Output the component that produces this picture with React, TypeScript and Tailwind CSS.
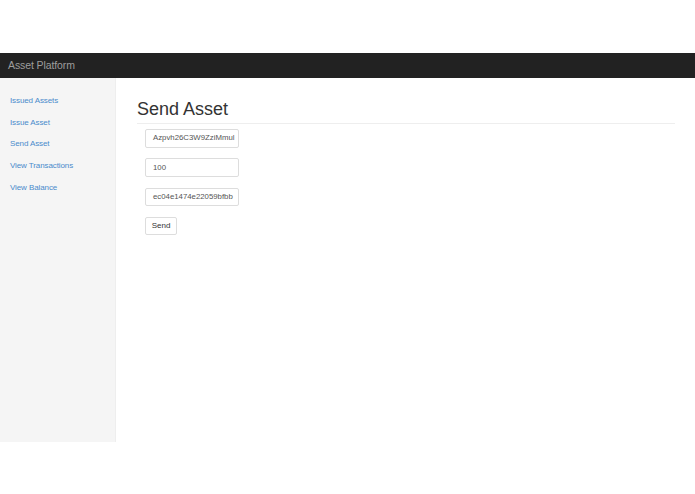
import React from "react";

const links = ["Issued Assets", "Issue Asset", "Send Asset", "View Transactions", "View Balance"];

export default function App() {
  return (
    <div className="w-[695px] h-[494px] bg-white overflow-hidden" style={{ fontFamily: '"Liberation Sans", Arial, sans-serif' }}>
      <div className="h-[53px]" />
      <div className="h-[25px] bg-[#222222] flex items-center pl-[8px]">
        <span className="text-[10.5px] text-[#9d9d9d] tracking-[-0.1px]">Asset Platform</span>
      </div>
      <div className="flex">
        <div className="w-[116px] h-[364px] bg-[#f5f5f5] border-r border-[#eeeeee] pt-[12px] flex flex-col">
          {links.map((l) => (
            <a key={l} className="h-[21.8px] pl-[10px] flex items-center text-[8px] text-[#4a8bcc] leading-none tracking-[-0.1px]">
              {l}
            </a>
          ))}
        </div>
        <div className="flex-1 pl-[21px] pr-[20px]">
          <div className="mt-[18px] h-[28px] border-b border-[#eeeeee] flex items-start">
            <h1 className="text-[18px] leading-[26px] text-[#333333] font-medium">Send Asset</h1>
          </div>
          <div className="pl-[8px] pt-[5px] flex flex-col gap-[10.8px]">
            {["Azpvh26C3W9ZziMmul", "100", "ec04e1474e22059bfbb"].map((v) => (
              <div key={v} className="w-[94px] h-[18.5px] border border-[#dddddd] rounded-[2px] flex items-center pl-[7px] text-[7.8px] text-[#555555] overflow-hidden whitespace-nowrap">
                {v}
              </div>
            ))}
            <div className="w-[32px] h-[18.5px] border border-[#dddddd] rounded-[2px] flex items-center justify-center text-[8px] text-[#333333]">
              Send
            </div>
          </div>
        </div>
      </div>
    </div>
  );
}
